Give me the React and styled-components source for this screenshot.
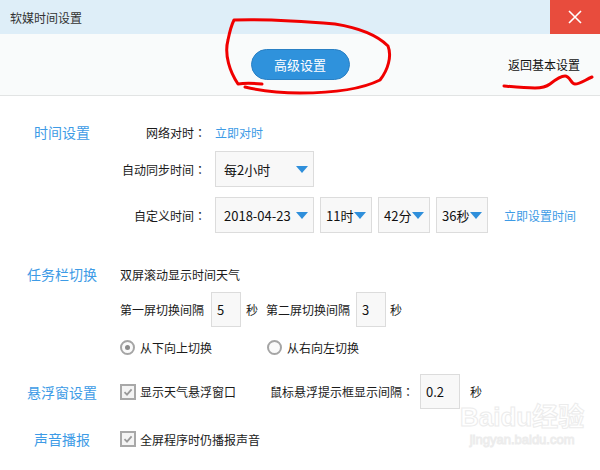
import React from 'react';
import styled, { createGlobalStyle } from 'styled-components';

const GlobalStyle = createGlobalStyle`
  html, body {
    margin: 0;
    padding: 0;
    background: #ffffff;
    overflow: hidden;
  }
  body {
    font-family: "Noto Sans CJK SC", "Noto Sans", sans-serif;
    color: #222;
  }
`;

const Window = styled.div`
  position: relative;
  width: 600px;
  height: 470px;
  background: #ffffff;
  overflow: hidden;
`;

const TitleBar = styled.div`
  height: 34px;
  background: #deeef8;
  display: flex;
  align-items: center;
  justify-content: space-between;
`;

const Title = styled.div`
  padding-left: 10px;
  font-size: 12px;
  color: #333;
`;

const CloseButton = styled.div`
  width: 50px;
  height: 34px;
  background: #e84c3d;
  display: flex;
  align-items: center;
  justify-content: center;
`;

const Header = styled.div`
  height: 61px;
  background: #f9fbfb;
  border-bottom: 1px solid #e2e4e4;
  display: grid;
  grid-template-columns: 1fr auto 1fr;
  align-items: center;
`;

const PillButton = styled.div`
  grid-column: 2;
  width: 97px;
  height: 29px;
  border-radius: 16px;
  background: #2f92dc;
  border: 1px solid #2a80c4;
  color: #ffffff;
  font-size: 13px;
  display: flex;
  align-items: center;
  justify-content: center;
`;

const BackLink = styled.div`
  grid-column: 3;
  justify-self: end;
  padding-right: 20px;
  font-size: 12px;
  color: #111;
`;

const Body = styled.div`
  display: flex;
  flex-direction: column;
  padding-left: 20px;
`;

const Section = styled.div`
  display: grid;
  grid-template-columns: 84px 1fr;
  column-gap: 16px;
  margin-top: ${(p) => p.top}px;
`;

const SectionLabel = styled.div`
  height: ${(p) => p.h}px;
  display: flex;
  align-items: center;
  justify-content: center;
  font-size: 14px;
  color: #3d9be6;
  white-space: nowrap;
`;

const Rows = styled.div`
  display: flex;
  flex-direction: column;
`;

const Row = styled.div`
  display: flex;
  align-items: center;
  height: ${(p) => p.h || 20}px;
  margin-top: ${(p) => p.top || 0}px;
  font-size: 12px;
  color: #1a1a1a;
  white-space: nowrap;
`;

const FieldLabel = styled.div`
  width: 86px;
  text-align: right;
  margin-right: 9px;
`;

const Colon = styled.span`
  font-family: "Noto Sans CJK TC", "Noto Sans CJK SC", sans-serif;
`;

const BlueLink = styled.span`
  color: #3d9be6;
  margin-left: ${(p) => p.left || 0}px;
`;

const Select = styled.div`
  box-sizing: border-box;
  width: ${(p) => p.w}px;
  height: 36px;
  margin-right: ${(p) => p.gap || 0}px;
  padding: 0 5px 0 ${(p) => p.pl || 5}px;
  background: #f8f8f8;
  border: 1px solid #dcdcdc;
  display: flex;
  align-items: center;
  justify-content: space-between;
  font-size: 13px;
  color: #111;
`;

const Arrow = styled.span`
  width: 0;
  height: 0;
  border-left: 6.5px solid transparent;
  border-right: 6.5px solid transparent;
  border-top: 7px solid #2f8fdb;
`;

const NumberBox = styled.div`
  box-sizing: border-box;
  width: ${(p) => p.w}px;
  height: 35px;
  margin: 0 ${(p) => p.mr}px 0 ${(p) => p.ml}px;
  padding-left: 5px;
  background: #f8f8f8;
  border: 1px solid #dcdcdc;
  display: flex;
  align-items: center;
  font-size: 13px;
  color: #111;
`;

const Text = styled.span`
  margin-left: ${(p) => p.left || 0}px;
`;

const Radio = styled.span`
  box-sizing: border-box;
  width: 15px;
  height: 15px;
  border-radius: 50%;
  border: 2px solid #a5a5a5;
  background: #fafafa;
  margin-right: 5px;
  display: flex;
  align-items: center;
  justify-content: center;
  &::after {
    content: '';
    display: ${(p) => (p.checked ? 'block' : 'none')};
    width: 5px;
    height: 5px;
    border-radius: 50%;
    background: #8a8a8a;
  }
`;

const RadioItem = styled.div`
  display: flex;
  align-items: center;
  width: ${(p) => p.w || 'auto'};
`;

const Checkbox = styled.span`
  box-sizing: border-box;
  width: 16px;
  height: 16px;
  border: 2px solid #a8a8a8;
  background: #f4f4f4;
  margin-right: 4px;
  display: flex;
  align-items: center;
  justify-content: center;
`;

const CheckItem = styled.div`
  display: flex;
  align-items: center;
  width: ${(p) => p.w || 'auto'};
`;

const Scribble = styled.svg`
  position: absolute;
  left: 0;
  top: 0;
  pointer-events: none;
`;

const Watermark = styled.div`
  position: absolute;
  left: 460px;
  top: 402px;
  display: flex;
  flex-direction: column;
  align-items: center;
  color: transparent;
  -webkit-text-stroke: 1px #ececec;
  font-family: "Liberation Sans", sans-serif;
  pointer-events: none;
`;

const MarkLogo = styled.div`
  font-size: 26px;
  font-weight: bold;
  line-height: 30px;
  font-family: "Liberation Sans", "Noto Sans CJK SC", sans-serif;
`;

const MarkUrl = styled.div`
  font-size: 13px;
  line-height: 16px;
`;

const CheckMark = () => (
  <svg width="10" height="10" viewBox="0 0 10 10">
    <path d="M1.5 5.2 L4 7.6 L8.6 2.4" fill="none" stroke="#9a9a9a" strokeWidth="1.8" />
  </svg>
);

export default function App() {
  return (
    <Window>
      <GlobalStyle />
      <TitleBar>
        <Title>软媒时间设置</Title>
        <CloseButton>
          <svg width="14" height="14" viewBox="0 0 14 14">
            <path d="M1 1 L13 13 M13 1 L1 13" stroke="#fff" strokeWidth="1.6" />
          </svg>
        </CloseButton>
      </TitleBar>
      <Header>
        <PillButton>高级设置</PillButton>
        <BackLink>返回基本设置</BackLink>
      </Header>

      <Body>
        <Section top={26}>
          <SectionLabel h={20}>时间设置</SectionLabel>
          <Rows>
            <Row>
              <FieldLabel>网络对时<Colon>：</Colon></FieldLabel>
              <BlueLink>立即对时</BlueLink>
            </Row>
            <Row h={36} top={9}>
              <FieldLabel>自动同步时间<Colon>：</Colon></FieldLabel>
              <Select w={99} pl={8}>每2小时<Arrow /></Select>
            </Row>
            <Row h={36} top={10}>
              <FieldLabel>自定义时间<Colon>：</Colon></FieldLabel>
              <Select w={99} pl={8} gap={6}>2018-04-23<Arrow /></Select>
              <Select w={52} gap={6}>11时<Arrow /></Select>
              <Select w={52} gap={6}>42分<Arrow /></Select>
              <Select w={52}>36秒<Arrow /></Select>
              <BlueLink left={16}>立即设置时间</BlueLink>
            </Row>
          </Rows>
        </Section>

        <Section top={31}>
          <SectionLabel h={20}>任务栏切换</SectionLabel>
          <Rows>
            <Row>双屏滚动显示时间天气</Row>
            <Row h={35} top={8}>
              <Text>第一屏切换间隔</Text>
              <NumberBox w={30} ml={7} mr={5}>5</NumberBox>
              <Text>秒</Text>
              <Text left={8}>第二屏切换间隔</Text>
              <NumberBox w={30} ml={6} mr={4}>3</NumberBox>
              <Text>秒</Text>
            </Row>
            <Row top={10}>
              <RadioItem w="147px">
                <Radio checked />从下向上切换
              </RadioItem>
              <RadioItem>
                <Radio />从右向左切换
              </RadioItem>
            </Row>
          </Rows>
        </Section>

        <Section top={17}>
          <SectionLabel h={35}>悬浮窗设置</SectionLabel>
          <Rows>
            <Row h={35}>
              <CheckItem w="150px">
                <Checkbox><CheckMark /></Checkbox>显示天气悬浮窗口
              </CheckItem>
              <Text>鼠标悬浮提示框显示间隔<Colon>：</Colon></Text>
              <NumberBox w={40} ml={6} mr={10}>0.2</NumberBox>
              <Text>秒</Text>
            </Row>
          </Rows>
        </Section>

        <Section top={20}>
          <SectionLabel h={20}>声音播报</SectionLabel>
          <Rows>
            <Row>
              <CheckItem>
                <Checkbox><CheckMark /></Checkbox>全屏程序时仍播报声音
              </CheckItem>
            </Row>
          </Rows>
        </Section>
      </Body>

      <Watermark>
        <MarkLogo>Baidu经验</MarkLogo>
        <MarkUrl>jingyan.baidu.com</MarkUrl>
      </Watermark>

      <Scribble width="600" height="470" viewBox="0 0 600 470">
        <path
          d="M262 84 C252 83 244 83 238 84 C230 72 224 55 228 40 C230 30 232 24 234 20 C260 19 300 21 335 24 C360 28 378 36 388 46 C392 56 388 70 380 80 C360 90 330 93 300 93 C280 93 262 91 245 87"
          fill="none"
          stroke="#f00000"
          strokeWidth="3"
          strokeLinecap="round"
          strokeLinejoin="round"
        />
        <path
          d="M504 86 C515 87 525 88 535 88 C542 88 546 87 550 84 C555 80 560 76 565 76 C570 76 571 84 575 84 C580 84 585 80 592 77"
          fill="none"
          stroke="#f00000"
          strokeWidth="3"
          strokeLinecap="round"
          strokeLinejoin="round"
        />
      </Scribble>
    </Window>
  );
}
